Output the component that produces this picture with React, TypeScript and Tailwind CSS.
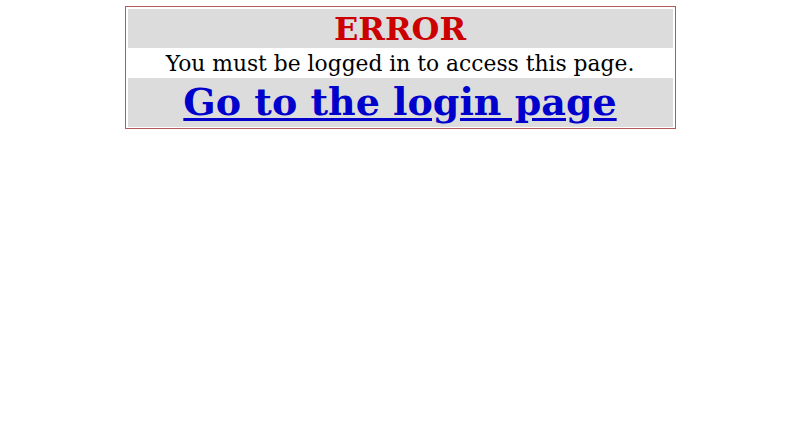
import React from 'react'

export default function App() {
  return (
    <div className="min-h-screen bg-white pt-[6px]" style={{ fontFamily: '"DejaVu Serif", serif' }}>
      <div className="mx-auto w-[551px] border border-[#b35a5a] p-[2px] pb-[1px] flex flex-col gap-[1px]">
        {/* Title */}
        <div className="bg-[#dcdcdc] h-[39px] flex items-center justify-center">
          <span className="text-[32px] font-bold text-[#cc0000] leading-none">ERROR</span>
        </div>

        {/* Message */}
        <div className="bg-white h-[28px] pt-[2px] flex items-center justify-center">
          <span className="text-[21.8px] text-black leading-none">You must be logged in to access this page.</span>
        </div>

        {/* Link */}
        <div className="bg-[#dcdcdc] h-[49px] pb-[2px] flex items-center justify-center">
          <a href="#" className="text-[38px] font-bold text-[#0000cc] underline underline-offset-[3px] leading-none">
            Go to the login page
          </a>
        </div>
      </div>
    </div>
  )
}
